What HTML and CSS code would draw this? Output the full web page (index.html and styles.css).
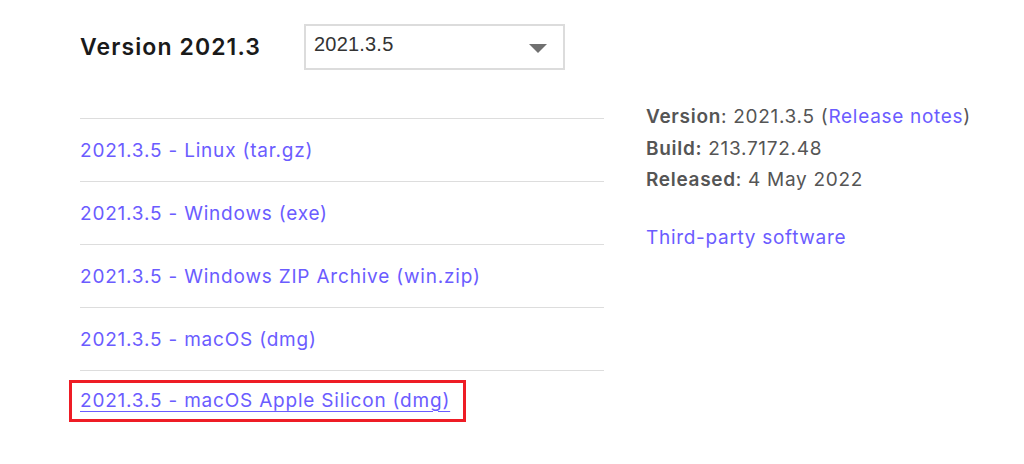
FILE: index.html
```html
<!DOCTYPE html>
<html lang="en">
<head>
<meta charset="utf-8">
<title>Version 2021.3</title>
<link rel="stylesheet" href="styles.css">
</head>
<body>
<div class="page">
  <div class="header">
    <h2 class="title">Version 2021.3</h2>
    <div class="select">
      <span class="select-value">2021.3.5</span>
      <svg class="caret" width="18" height="9" viewBox="0 0 18 9"><path d="M0 0 H18 L9 9 Z" fill="#707070"/></svg>
    </div>
  </div>
  <div class="columns">
    <ul class="downloads">
      <li class="row"><a class="link" href="#">2021.3.5 - Linux (tar.gz)</a></li>
      <li class="row"><a class="link" href="#">2021.3.5 - Windows (exe)</a></li>
      <li class="row"><a class="link" href="#">2021.3.5 - Windows ZIP Archive (win.zip)</a></li>
      <li class="row"><a class="link" href="#">2021.3.5 - macOS (dmg)</a></li>
      <li class="row"><span class="highlight"><a class="link link-hover" href="#">2021.3.5 - macOS Apple Silicon (dmg)</a></span></li>
    </ul>
    <div class="info">
      <div class="info-line"><span class="label">Version</span>: 2021.3.5 (<a class="link" href="#">Release notes</a>)</div>
      <div class="info-line"><span class="label">Build:</span> 213.7172.48</div>
      <div class="info-line"><span class="label">Released</span>: 4 May 2022</div>
      <div class="info-line spaced"><a class="link" href="#">Third-party software</a></div>
    </div>
  </div>
</div>
</body>
</html>
```
FILE: styles.css
```css
html, body {
  margin: 0;
  padding: 0;
  background: #ffffff;
}
body {
  font-family: Inter, "Noto Sans", sans-serif;
  color: #222;
}
.page {
  padding: 24px 0 0 80px;
}
.header {
  display: flex;
  align-items: center;
  height: 46px;
}
.title {
  margin: 0;
  font-size: 23px;
  font-weight: 600;
  color: #1a1a1a;
  width: 224px;
  letter-spacing: 1.1px;
}
.select {
  box-sizing: border-box;
  width: 261px;
  height: 46px;
  border: 2px solid #dcdcdc;
  display: flex;
  align-items: center;
  justify-content: space-between;
  padding: 0 16px 0 8px;
  font-family: "Liberation Sans", Arial, sans-serif;
  font-size: 20px;
  letter-spacing: 0.2px;
  color: #333;
}
.select-value {
  margin-top: -6px;
}
.caret {
  margin-top: 2px;
}
.columns {
  display: flex;
  margin-top: 31px;
}
.downloads {
  list-style: none;
  margin: 17px 0 0 0;
  padding: 0;
  width: 524px;
  flex: none;
}
.row {
  border-top: 1px solid #dddddd;
  height: 62px;
  display: flex;
  align-items: center;
}
.link {
  color: #6b5cff;
  text-decoration: none;
  font-size: 19px;
  letter-spacing: 0.8px;
}
.link-hover {
  text-decoration: underline;
  text-underline-offset: 4px;
  text-decoration-thickness: 1px;
}
.highlight {
  display: inline-block;
  border: 3px solid #ee1c25;
  padding: 6px 13px 7px 8px;
  margin: -3px 0 0 -11px;
}
.info {
  margin-left: 42px;
  color: #555;
  font-size: 19px;
  letter-spacing: 0.7px;
}
.info .link {
  font-size: inherit;
  letter-spacing: inherit;
}
.info-line {
  line-height: 31.5px;
}
.label {
  font-weight: 600;
}
.spaced {
  margin-top: 26px;
}
```
